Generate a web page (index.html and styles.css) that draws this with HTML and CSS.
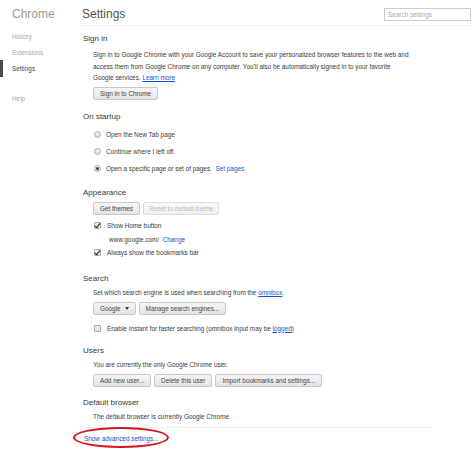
FILE: index.html
```html
<!DOCTYPE html>
<html lang="en">
<head>
    <meta charset="UTF-8">
    <title>Settings</title>
    <link rel="stylesheet" href="styles.css">
</head>
<body>
    <div class="page">
        <div class="sidebar">
            <div class="brand">Chrome</div>
            <ul class="nav">
                <li>History</li>
                <li>Extensions</li>
                <li class="active">Settings</li>
                <li class="help">Help</li>
            </ul>
        </div>

        <div class="main">
            <div class="header">
                <h1>Settings</h1>
                <div class="search">Search settings</div>
            </div>

            <div class="section signin">
                <h3>Sign in</h3>
                <div class="content">
                    <p class="para">Sign in to Google Chrome with your Google Account to save your personalized browser features to the web and<br>
                    access them from Google Chrome on any computer. You'll also be automatically signed in to your favorite<br>
                    Google services. <a class="link underline">Learn more</a></p>
                    <div class="buttons">
                        <span class="btn">Sign in to Chrome</span>
                    </div>
                </div>
            </div>

            <div class="section startup">
                <h3>On startup</h3>
                <div class="content">
                    <div class="radio-row"><span class="radio"></span><span>Open the New Tab page</span></div>
                    <div class="radio-row"><span class="radio"></span><span>Continue where I left off.</span></div>
                    <div class="radio-row"><span class="radio checked"></span><span>Open a specific page or set of pages. &nbsp;<a class="link">Set pages</a></span></div>
                </div>
            </div>

            <div class="section">
                <h3>Appearance</h3>
                <div class="content">
                    <div class="buttons">
                        <span class="btn">Get themes</span>
                        <span class="btn disabled">Reset to default theme</span>
                    </div>
                    <div class="check-row"><span class="checkbox checked"></span><span>Show Home button</span></div>
                    <div class="check-row sub"><span>www.google.com/ &nbsp;<a class="link">Change</a></span></div>
                    <div class="check-row"><span class="checkbox checked"></span><span>Always show the bookmarks bar</span></div>
                </div>
            </div>

            <div class="section search-section">
                <h3>Search</h3>
                <div class="content">
                    <p class="line">Set which search engine is used when searching from the <a class="link underline">omnibox</a>.</p>
                    <div class="buttons">
                        <span class="btn select">Google <span class="caret"></span></span>
                        <span class="btn">Manage search engines...</span>
                    </div>
                    <div class="check-row instant"><span class="checkbox"></span><span>Enable Instant for faster searching (omnibox input may be <a class="link underline">logged</a>)</span></div>
                </div>
            </div>

            <div class="section">
                <h3>Users</h3>
                <div class="content">
                    <p class="line">You are currently the only Google Chrome user.</p>
                    <div class="buttons">
                        <span class="btn">Add new user...</span>
                        <span class="btn">Delete this user</span>
                        <span class="btn">Import bookmarks and settings...</span>
                    </div>
                </div>
            </div>

            <div class="section">
                <h3>Default browser</h3>
                <div class="content">
                    <p class="line">The default browser is currently Google Chrome.</p>
                </div>
            </div>

            <div class="footer">
                <a class="link advanced">Show advanced settings...</a>
                <span class="circle"></span>
            </div>
        </div>
    </div>
</body>
</html>
```

FILE: styles.css
```css
* {
    margin: 0;
    padding: 0;
    box-sizing: border-box;
}

body {
    background: #fff;
    font-family: 'Liberation Sans', Arial, sans-serif;
    font-size: 6.4px;
    color: #3a3a3a;
}

.page {
    display: flex;
    width: 474px;
    height: 453px;
    overflow: hidden;
}

.sidebar {
    width: 80px;
    flex-shrink: 0;
}

.brand {
    padding: 7px 0 0 12px;
    font-size: 12px;
    line-height: 14px;
    color: #999;
}

.nav {
    list-style: none;
    margin-top: 8px;
}

.nav li {
    padding-left: 12px;
    line-height: 15.5px;
    color: #aaa;
}

.nav li.active {
    color: #444;
    border-left: 3px solid #4a4a4a;
    padding-left: 9px;
    line-height: 17px;
}

.nav li.help {
    margin-top: 14px;
}

.main {
    flex: 1;
    padding-right: 3px;
}

.header {
    display: flex;
    justify-content: space-between;
    align-items: center;
    height: 26px;
    padding-left: 2px;
    border-bottom: 1px solid #eee;
}

.header h1 {
    font-weight: normal;
    font-size: 12px;
    color: #555;
    margin-top: 2px;
}

.search {
    width: 87px;
    height: 13px;
    border: 1px solid #ccc;
    color: #aaa;
    padding-left: 3px;
    line-height: 11px;
    margin-top: 4px;
}

.section {
    width: 352px;
    margin-top: 10px;
}

.section.signin {
    margin-top: 7px;
}

.section.startup {
    margin-top: 11px;
}

.section.search-section {
    margin-top: 14px;
}

.section h3 {
    font-weight: normal;
    font-size: 8px;
    line-height: 12px;
    color: #303942;
    padding-left: 3px;
}

.content {
    padding-left: 13px;
}

.para {
    line-height: 11.6px;
    margin-top: 4px;
}

.line {
    line-height: 12px;
    margin-top: 2px;
}

.link {
    color: #15c;
}

.underline {
    text-decoration: underline;
}

.buttons {
    display: flex;
    gap: 3px;
    margin-top: 3px;
}

.btn {
    display: inline-flex;
    align-items: center;
    gap: 4px;
    height: 13px;
    padding: 0 6px;
    border: 1px solid #c8c8c8;
    border-radius: 2px;
    background: linear-gradient(#f6f6f6, #e4e4e4);
    color: #444;
}

.btn.disabled {
    color: #bbb;
    border-color: #ddd;
    padding: 0 5px;
    background: linear-gradient(#fafafa, #f0f0f0);
}

.caret {
    width: 0;
    height: 0;
    border-left: 2.5px solid transparent;
    border-right: 2.5px solid transparent;
    border-top: 3px solid #333;
}

.radio-row {
    display: flex;
    align-items: center;
    height: 17px;
    padding-left: 1px;
}

.section .radio-row:first-child {
    margin-top: 3px;
}

.radio {
    width: 7px;
    height: 7px;
    border: 1px solid #aaa;
    border-radius: 50%;
    background: linear-gradient(#f2f2f2, #ddd);
    margin-right: 5px;
    display: flex;
    align-items: center;
    justify-content: center;
}

.radio.checked::after {
    content: "";
    width: 3px;
    height: 3px;
    border-radius: 50%;
    background: #333;
}

.check-row {
    display: flex;
    align-items: center;
    height: 13.5px;
    padding-left: 1px;
}

.buttons + .check-row {
    margin-top: 4px;
}

.check-row.sub {
    padding-left: 16px;
}

.check-row.instant {
    margin-top: 6px;
}

.checkbox {
    position: relative;
    width: 7px;
    height: 7px;
    border: 1px solid #aaa;
    border-radius: 1px;
    background: linear-gradient(#f4f4f4, #ddd);
    margin-right: 6px;
}

.checkbox.checked::after {
    content: "";
    position: absolute;
    left: 1px;
    top: -1px;
    width: 2px;
    height: 5px;
    border-right: 1.5px solid #222;
    border-bottom: 1.5px solid #222;
    transform: rotate(40deg);
}

.footer {
    position: relative;
    width: 352px;
    margin-top: 4px;
    border-top: 1px solid #eee;
    padding: 5px 0 0 4px;
    line-height: 12px;
}

.circle {
    position: absolute;
    left: -7px;
    top: -1px;
    width: 96px;
    height: 21px;
    border: 2px solid #d4141c;
    border-radius: 50%;
}
```
